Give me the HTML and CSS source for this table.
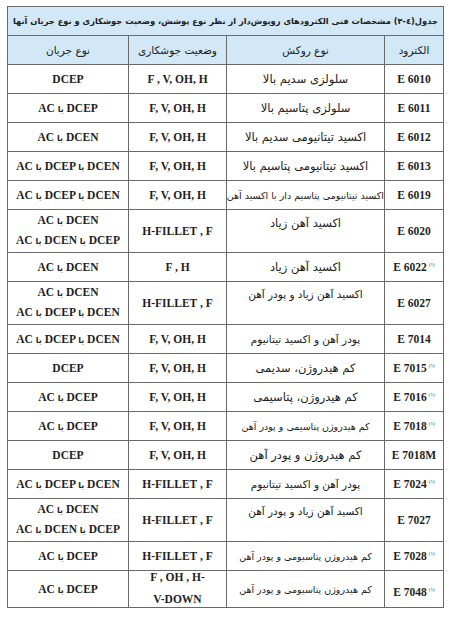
FILE: index.html
```html
<!DOCTYPE html>
<html lang="fa">
<head>
<meta charset="utf-8">
<title>جدول الکترودها</title>
<link rel="stylesheet" href="styles.css">
</head>
<body>
<table class="spec" dir="rtl">
<colgroup><col class="c-el"><col class="c-coat"><col class="c-pos"><col class="c-cur"></colgroup>
<tr class="title"><td colspan="4">جدول(٤-٣) مشخصات فنی الکترودهای روپوش‌دار از نظر نوع پوشش، وضعیت جوشکاری و نوع جریان آنها</td></tr>
<tr class="head"><td>الکترود</td><td>نوع روکش</td><td>وضعیت جوشکاری</td><td>نوع جریان</td></tr>
<tr class="s"><td class="el">E 6010</td><td class="coat lg">سلولزی سدیم بالا</td><td class="pos">F , V, OH, H</td><td class="cur">DCEP</td></tr>
<tr class="s"><td class="el">E 6011</td><td class="coat lg">سلولزی پتاسیم بالا</td><td class="pos">F, V, OH, H</td><td class="cur">AC <span class="ya">یا</span> DCEP</td></tr>
<tr class="s"><td class="el">E 6012</td><td class="coat lg">اکسید تیتانیومی سدیم بالا</td><td class="pos">F, V, OH, H</td><td class="cur">AC <span class="ya">یا</span> DCEN</td></tr>
<tr class="s"><td class="el">E 6013</td><td class="coat lg">اکسید تیتانیومی پتاسیم بالا</td><td class="pos">F, V, OH, H</td><td class="cur">AC <span class="ya">یا</span> DCEP <span class="ya">یا</span> DCEN</td></tr>
<tr class="s"><td class="el">E 6019</td><td class="coat sm">اکسید تیتانیومی پتاسیم دار با اکسید آهن</td><td class="pos">F, V, OH, H</td><td class="cur">AC <span class="ya">یا</span> DCEP <span class="ya">یا</span> DCEN</td></tr>
<tr class="d"><td class="el">E 6020</td><td class="coat lg top">اکسید آهن زیاد</td><td class="pos">H-FILLET , F</td><td class="cur two">AC <span class="ya">یا</span> DCEN<br>AC <span class="ya">یا</span> DCEN <span class="ya">یا</span> DCEP</td></tr>
<tr class="s"><td class="el">E 6022<sup class="note">(۱)</sup></td><td class="coat lg">اکسید آهن زیاد</td><td class="pos">F , H</td><td class="cur">AC <span class="ya">یا</span> DCEN</td></tr>
<tr class="d"><td class="el">E 6027</td><td class="coat top">اکسید آهن زیاد و پودر آهن</td><td class="pos">H-FILLET , F</td><td class="cur two">AC <span class="ya">یا</span> DCEN<br>AC <span class="ya">یا</span> DCEP <span class="ya">یا</span> DCEN</td></tr>
<tr class="s"><td class="el">E 7014</td><td class="coat">پودر آهن و اکسید تیتانیوم</td><td class="pos">F, V, OH, H</td><td class="cur">AC <span class="ya">یا</span> DCEP <span class="ya">یا</span> DCEN</td></tr>
<tr class="s"><td class="el">E 7015<sup class="note">(۱)</sup></td><td class="coat lg">کم هیدروژن، سدیمی</td><td class="pos">F, V, OH, H</td><td class="cur">DCEP</td></tr>
<tr class="s"><td class="el">E 7016<sup class="note">(۱)</sup></td><td class="coat lg">کم هیدروژن، پتاسیمی</td><td class="pos">F, V, OH, H</td><td class="cur">AC <span class="ya">یا</span> DCEP</td></tr>
<tr class="s"><td class="el">E 7018<sup class="note">(۱)</sup></td><td class="coat sm">کم هیدروژن پتاسیمی و پودر آهن</td><td class="pos">F, V, OH, H</td><td class="cur">AC <span class="ya">یا</span> DCEP</td></tr>
<tr class="s"><td class="el">E 7018M</td><td class="coat lg">کم هیدروژن و پودر آهن</td><td class="pos">F, V, OH, H</td><td class="cur">DCEP</td></tr>
<tr class="s"><td class="el">E 7024<sup class="note">(۱)</sup></td><td class="coat">پودر آهن و اکسید تیتانیوم</td><td class="pos">H-FILLET , F</td><td class="cur">AC <span class="ya">یا</span> DCEP <span class="ya">یا</span> DCEN</td></tr>
<tr class="d"><td class="el">E 7027</td><td class="coat top">اکسید آهن زیاد و پودر آهن</td><td class="pos">H-FILLET , F</td><td class="cur two">AC <span class="ya">یا</span> DCEN<br>AC <span class="ya">یا</span> DCEN <span class="ya">یا</span> DCEP</td></tr>
<tr class="s"><td class="el">E 7028<sup class="note">(۱)</sup></td><td class="coat sm">کم هیدروژن پتاسیومی و پودر آهن</td><td class="pos">H-FILLET , F</td><td class="cur">AC <span class="ya">یا</span> DCEP</td></tr>
<tr class="t"><td class="el low">E 7048<sup class="note">(۱)</sup></td><td class="coat sm">کم هیدروژن پتاسیومی و پودر آهن</td><td class="pos"><div class="wide">F , OH , H-<br>V-DOWN</div></td><td class="cur">AC <span class="ya">یا</span> DCEP</td></tr>
</table>
</body>
</html>
```

FILE: styles.css
```css
html, body {
  background: #ffffff;
}
body {
  margin: 6px 0 0 7px;
  font-family: "Liberation Serif", "DejaVu Sans", serif;
  color: #1f1f1f;
}
.spec {
  border-collapse: collapse;
  table-layout: fixed;
  width: 437px;
  border: 1.5px solid #555555;
}
.c-el { width: 59px; }
.c-coat { width: 158px; }
.c-pos { width: 98px; }
.c-cur { width: 121px; }
.spec td {
  border: 1px solid #6a6a6a;
  padding: 0;
  text-align: center;
  vertical-align: middle;
  white-space: nowrap;
  overflow: hidden;
}
.title td {
  height: 28px;
  background: #d3e8f6;
  text-align: right;
  padding-right: 5px;
  font-family: "DejaVu Sans", sans-serif;
  font-weight: bold;
  font-size: 8.3px;
  color: #202020;
}
.head td {
  height: 28px;
  background: #d3e8f6;
  font-family: "DejaVu Sans", sans-serif;
  font-size: 10.5px;
  color: #202020;
}
.s td { height: 28px; }
.d td { height: 42px; }
.t td { height: 36px; }
.el, .pos, .cur {
  direction: ltr;
  font-family: "Liberation Serif", "DejaVu Sans", serif;
  font-weight: bold;
  font-size: 11.5px;
}
.ya {
  font-family: "DejaVu Sans", sans-serif;
  font-size: 8px;
}
.coat {
  font-family: "DejaVu Sans", sans-serif;
  font-size: 10.5px;
  color: #1a1a1a;
}
.coat.lg {
  font-size: 11.5px;
}
.coat.sm {
  font-size: 9.5px;
}
.d td.coat.top {
  height: 36px;
  vertical-align: top;
  padding-top: 6px;
}
.cur.two {
  line-height: 18px;
}
.wide {
  line-height: 22px;
  margin: -6px 0 -3px;
}
.t td.el.low {
  height: 31px;
  padding-top: 5px;
}
.note {
  font-size: 5px;
  font-weight: normal;
  vertical-align: 5px;
  margin-left: 2px;
}
```
